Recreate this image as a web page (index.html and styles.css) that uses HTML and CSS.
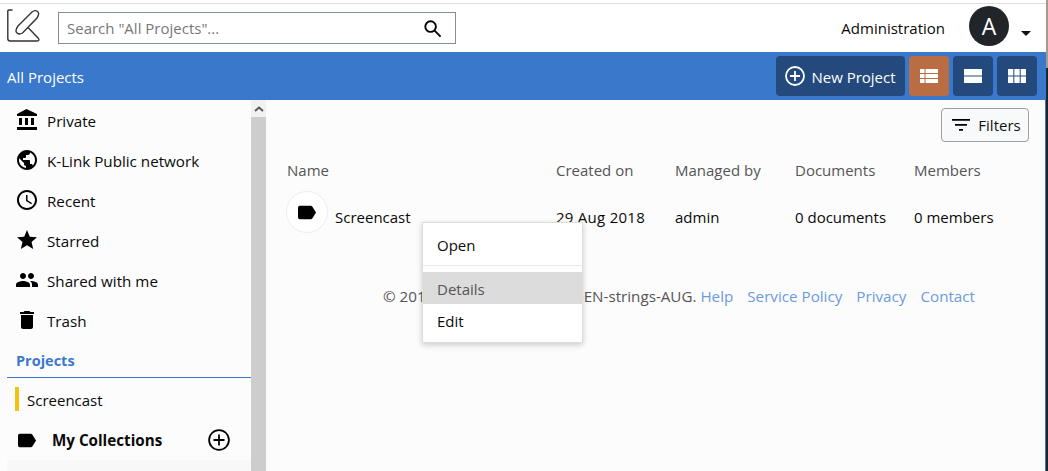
FILE: index.html
```html
<!DOCTYPE html>
<html lang="en">

<head>
    <meta charset="UTF-8">
    <title>All Projects</title>
    <link rel="stylesheet" href="styles.css">
</head>

<body>
    <div class="page">
        <div class="app">
            <header class="topbar">
                <svg class="logo" viewBox="0 0 34 34" fill="none" stroke="#333" stroke-width="1.400">
                    <path d="M5.500 1H2Q.8 1 .8 2.200V29.500Q.8 32 3.300 32H29.500Q33 32 31.500 29.500L21 18.500"/>
                    <path d="M11 17L25 3Q28 .5 30.500 2.500T30 9L15.500 24Q12.500 26 10 24T11 17Z"/>
                </svg>
                <div class="search">
                    <span class="search-text">Search "All Projects"...</span>
                    <svg class="search-icon" viewBox="0 0 20 20" fill="none" stroke="#000" stroke-width="2">
                        <circle cx="8" cy="8" r="5.600"/>
                        <path d="M12.200 12.200L18.500 18.500"/>
                    </svg>
                </div>
                <span class="admin">Administration</span>
                <span class="avatar">A</span>
                <span class="caret"></span>
            </header>

            <div class="bluebar">
                <span class="bluebar-title">All Projects</span>
                <div class="actions">
                    <button class="btn btn-new">
                        <svg viewBox="0 0 20 20" fill="none" stroke="#fff" stroke-width="1.800">
                            <circle cx="10" cy="10" r="9"/>
                            <path d="M10 5V15M5 10H15"/>
                        </svg>
                        <span class="btn-label">New Project</span>
                    </button>
                    <button class="btn btn-view active">
                        <svg viewBox="0 0 18 14" fill="#fff">
                            <path d="M0 0H4.500V4H0ZM5.500 0H18V4H5.500ZM0 5H4.500V9H0ZM5.500 5H18V9H5.500ZM0 10H4.500V14H0ZM5.500 10H18V14H5.500Z"/>
                        </svg>
                    </button>
                    <button class="btn btn-view">
                        <svg viewBox="0 0 18 14" fill="#fff">
                            <path d="M0 0H18V6.500H0ZM0 7.500H18V14H0Z"/>
                        </svg>
                    </button>
                    <button class="btn btn-view">
                        <svg viewBox="0 0 18 14" fill="#fff">
                            <path d="M0 0H5.300V6.500H0ZM6.300 0H11.700V6.500H6.300ZM12.700 0H18V6.500H12.700ZM0 7.500H5.300V14H0ZM6.300 7.500H11.700V14H6.300ZM12.700 7.500H18V14H12.700Z"/>
                        </svg>
                    </button>
                </div>
            </div>

            <div class="content">
                <aside class="sidebar">
                    <nav class="nav">
                        <a class="nav-item">
                            <svg viewBox="0 0 24 24"><path d="M4 10v7h3v-7H4zm6 0v7h3v-7h-3zM2 22h20v-3H2v3zm14-12v7h3v-7h-3zM11.500 1L2 6v2h20V6l-10.500-5z"/></svg>
                            Private
                        </a>
                        <a class="nav-item">
                            <svg viewBox="0 0 24 24"><path d="M12 2C6.480 2 2 6.480 2 12s4.480 10 10 10 10-4.480 10-10S17.520 2 12 2zm-1 17.930c-3.950-.49-7-3.850-7-7.930 0-.62.080-1.210.21-1.790L9 15v1c0 1.100.9 2 2 2v1.930zm6.900-2.540c-.26-.81-1-1.390-1.900-1.390h-1v-3c0-.55-.45-1-1-1H8v-2h2c.55 0 1-.45 1-1V7h2c1.100 0 2-.9 2-2v-.41c2.930 1.190 5 4.060 5 7.410 0 2.080-.8 3.970-2.100 5.390z"/></svg>
                            K-Link Public network
                        </a>
                        <a class="nav-item">
                            <svg viewBox="0 0 24 24"><path d="M11.990 2C6.470 2 2 6.480 2 12s4.470 10 9.990 10C17.520 22 22 17.520 22 12S17.520 2 11.990 2zM12 20c-4.420 0-8-3.580-8-8s3.580-8 8-8 8 3.580 8 8-3.580 8-8 8zm.500-13H11v6l5.250 3.150.75-1.230-4.500-2.670z"/></svg>
                            Recent
                        </a>
                        <a class="nav-item">
                            <svg viewBox="0 0 24 24"><path d="M12 17.270L18.180 21l-1.640-7.030L22 9.240l-7.190-.61L12 2 9.190 8.630 2 9.240l5.460 4.730L5.820 21z"/></svg>
                            Starred
                        </a>
                        <a class="nav-item">
                            <svg viewBox="0 0 24 24"><path d="M16 11c1.660 0 2.990-1.340 2.990-3S17.660 5 16 5s-3 1.340-3 3 1.340 3 3 3zm-8 0c1.660 0 2.990-1.340 2.990-3S9.660 5 8 5 5 6.340 5 8s1.340 3 3 3zm0 2c-2.330 0-7 1.170-7 3.500V19h14v-2.500c0-2.330-4.670-3.500-7-3.500zm8 0c-.29 0-.62.020-.97.050 1.160.84 1.970 1.970 1.970 3.450V19h6v-2.500c0-2.330-4.670-3.500-7-3.500z"/></svg>
                            Shared with me
                        </a>
                        <a class="nav-item">
                            <svg viewBox="0 0 24 24"><path d="M6 19c0 1.100.9 2 2 2h8c1.100 0 2-.9 2-2V7H6v12zM19 4h-3.500l-1-1h-5l-1 1H5v2h14V4z"/></svg>
                            Trash
                        </a>
                    </nav>
                    <h4 class="side-heading">Projects</h4>
                    <a class="project-item">Screencast</a>
                    <div class="collections">
                        <svg class="label-icon" viewBox="0 0 20 14"><path d="M2 0H13.500Q14.500 0 15 .8L19 7L15 13.200Q14.500 14 13.500 14H2Q0 14 0 12V2Q0 0 2 0Z"/></svg>
                        <span class="collections-title">My Collections</span>
                        <svg class="add-icon" viewBox="0 0 20 20" fill="none" stroke="#000" stroke-width="1.600">
                            <circle cx="10" cy="10" r="9"/>
                            <path d="M10 5V15M5 10H15"/>
                        </svg>
                    </div>
                    <div class="side-rest"></div>
                </aside>
                <div class="scrollbar">
                    <div class="scroll-btn">
                        <svg viewBox="0 0 10 6" fill="none" stroke="#555" stroke-width="1.800"><path d="M1 5L5 1.500L9 5"/></svg>
                    </div>
                </div>

                <main class="main">
                    <div class="filters-row">
                        <button class="filters">
                            <svg viewBox="0 0 18 12" fill="#000"><path d="M0 0H18V1.800H0ZM3 5H15V6.800H3ZM7 10H11V11.800H7Z"/></svg>
                            Filters
                        </button>
                    </div>
                    <div class="table">
                        <div class="row row-head">
                            <span>Name</span>
                            <span>Created on</span>
                            <span>Managed by</span>
                            <span>Documents</span>
                            <span>Members</span>
                        </div>
                        <div class="row row-body">
                            <span class="name-cell">
                                <span class="thumb">
                                    <svg class="label-icon" viewBox="0 0 20 14"><path d="M2 0H13.500Q14.500 0 15 .8L19 7L15 13.200Q14.500 14 13.500 14H2Q0 14 0 12V2Q0 0 2 0Z"/></svg>
                                </span>
                                Screencast
                            </span>
                            <span class="date">29 Aug 2018</span>
                            <span>admin</span>
                            <span>0 documents</span>
                            <span>0 members</span>
                        </div>
                    </div>
                    <footer class="footer">
                        © 2018 K-Link DMS ver 0.16-EN-strings-AUG.
                        <a>Help</a><a>Service Policy</a><a>Privacy</a><a>Contact</a>
                    </footer>
                    <ul class="menu">
                        <li class="menu-item">Open</li>
                        <li class="menu-sep"></li>
                        <li class="menu-item hover">Details</li>
                        <li class="menu-item">Edit</li>
                    </ul>
                </main>
            </div>
        </div>
        <div class="edge"></div>
    </div>
</body>

</html>
```
FILE: styles.css
```css
* {
    box-sizing: border-box;
}

html,
body {
    margin: 0;
    padding: 0;
}

body {
    font-family: "Open Sans", "Noto Sans", sans-serif;
    font-size: 15px;
    color: #0a0a0a;
    background: #fff;
}

.page {
    width: 1048px;
    height: 471px;
    overflow: hidden;
    display: flex;
}

.app {
    width: 1046px;
    flex: none;
    display: flex;
    flex-direction: column;
}

.edge {
    flex: 1;
    background: linear-gradient(#a39a90 68px, #1c242c 68px);
}

.topbar {
    height: 49px;
    margin-top: 3px;
    flex: none;
    display: flex;
    align-items: center;
    padding-left: 7px;
    border-top: 1px solid #ddd;
}

.logo {
    width: 34px;
    height: 34px;
    margin-right: 17px;
    margin-top: -4px;
}

.search {
    width: 398px;
    height: 32px;
    border: 1px solid #868e96;
    display: flex;
    align-items: center;
    justify-content: space-between;
    padding: 0 13px 0 8px;
}

.search-text {
    color: #777;
}

.search-icon {
    width: 19px;
    height: 19px;
}

.admin {
    margin-left: auto;
    margin-top: -1px;
}

.avatar {
    width: 40px;
    height: 40px;
    margin-left: 24px;
    margin-top: -4px;
    border-radius: 50%;
    background: #212529;
    color: #fff;
    font-size: 23px;
    display: flex;
    align-items: center;
    justify-content: center;
}

.caret {
    width: 0;
    height: 0;
    margin: 11px 15px 0 12px;
    border-left: 5px solid transparent;
    border-right: 5px solid transparent;
    border-top: 5px solid #111;
}

.bluebar {
    height: 48px;
    flex: none;
    background: #3a78cc;
    display: flex;
    align-items: center;
    justify-content: space-between;
    padding: 0 9px 0 7px;
    color: #fff;
}

.bluebar-title {
    padding-top: 2px;
}

.actions {
    display: flex;
    gap: 4px;
}

.btn {
    height: 40px;
    border: 0;
    border-radius: 4px;
    background: #24497d;
    color: #fff;
    font: inherit;
    display: flex;
    align-items: center;
    justify-content: center;
    padding: 0;
}

.btn-new {
    width: 129px;
    gap: 6px;
}

.btn-new svg {
    width: 20px;
    height: 20px;
}

.btn-label {
    padding-top: 2px;
}

.btn-view {
    width: 40px;
}

.btn-view svg {
    width: 18px;
    height: 14px;
}

.btn-view.active {
    background: #ba6d43;
}

.content {
    flex: 1;
    display: flex;
    min-height: 0;
    background: #fcfcfc;
    border-right: 1px solid #3a78cc;
}

.sidebar {
    width: 251px;
    flex: none;
    padding-left: 7px;
    overflow: hidden;
}

.nav-item {
    height: 40px;
    display: flex;
    align-items: center;
    gap: 8px;
    padding: 2px 0 0 8px;
    font-size: 15.200px;
}

.nav-item svg {
    width: 24px;
    height: 24px;
    margin-top: -2px;
}

.side-heading {
    margin: 0;
    height: 38px;
    padding: 11px 0 0 9px;
    font-size: 14.500px;
    font-weight: 700;
    color: #3a78cc;
    border-bottom: 1px solid #3a78cc;
}

.project-item {
    display: block;
    margin: 9px 0 0 8px;
    height: 24px;
    line-height: 27px;
    padding-left: 8px;
    border-left: 4px solid #f4c20d;
}

.collections {
    display: flex;
    align-items: center;
    height: 40px;
    margin-top: 9px;
    padding: 0 21px 0 11px;
}

.label-icon {
    width: 19px;
    height: 15px;
}

.collections-title {
    margin-left: 15px;
    font-size: 15.200px;
    font-weight: 700;
}

.add-icon {
    width: 22px;
    height: 22px;
    margin-left: auto;
}

.side-rest {
    height: 20px;
    background: #f8f8f8;
}

.scrollbar {
    width: 15px;
    flex: none;
    background: #cdcdcd;
}

.scroll-btn {
    height: 17px;
    background: #f1f1f1;
    display: flex;
    align-items: center;
    justify-content: center;
}

.scroll-btn svg {
    width: 10px;
    height: 6px;
}

.main {
    flex: 1;
    position: relative;
    padding-left: 21px;
}

.filters-row {
    display: flex;
    justify-content: flex-end;
    padding: 8px 16px 0 0;
}

.filters {
    width: 88px;
    height: 34px;
    border: 1px solid #9aa0a6;
    border-radius: 4px;
    background: #f8f9fa;
    font: inherit;
    color: #111;
    display: flex;
    align-items: center;
    justify-content: center;
    gap: 8px;
    padding: 0 0 0 3px;
}

.filters svg {
    width: 18px;
    height: 12px;
}

.row {
    display: grid;
    grid-template-columns: 269px 119px 120px 119px 1fr;
    align-items: center;
}

.row-head {
    margin-top: 13px;
    height: 30px;
    color: #555;
}

.row-body {
    height: 50px;
    margin-top: 7px;
}

.name-cell {
    display: flex;
    align-items: center;
    gap: 7px;
}

.thumb {
    width: 42px;
    height: 42px;
    margin-left: -1px;
    margin-top: -10px;
    border-radius: 50%;
    background: #fff;
    border: 1px solid #eee;
    display: flex;
    align-items: center;
    justify-content: center;
}

.date {
    letter-spacing: 0.27px;
}

.footer {
    margin-top: 44px;
    text-align: right;
    padding-right: 70px;
    font-size: 15.200px;
    color: #555;
}

.footer a {
    color: #6a9be0;
    margin-left: 14px;
}

.footer a:first-of-type {
    margin-left: 0;
}

.menu {
    position: absolute;
    left: 156px;
    top: 122px;
    width: 161px;
    height: 121px;
    margin: 0;
    padding: 5px 0 0;
    list-style: none;
    background: #fff;
    border: 1px solid #ddd;
    box-shadow: 0 2px 6px rgba(0, 0, 0, 0.2);
}

.menu-item {
    height: 32px;
    line-height: 34px;
    padding-left: 14px;
}

.menu-sep {
    height: 1px;
    margin: 5px 0 6px;
    background: #e9e9e9;
}

.menu-item.hover {
    background: #dcdcdc;
    color: #555;
}
```
